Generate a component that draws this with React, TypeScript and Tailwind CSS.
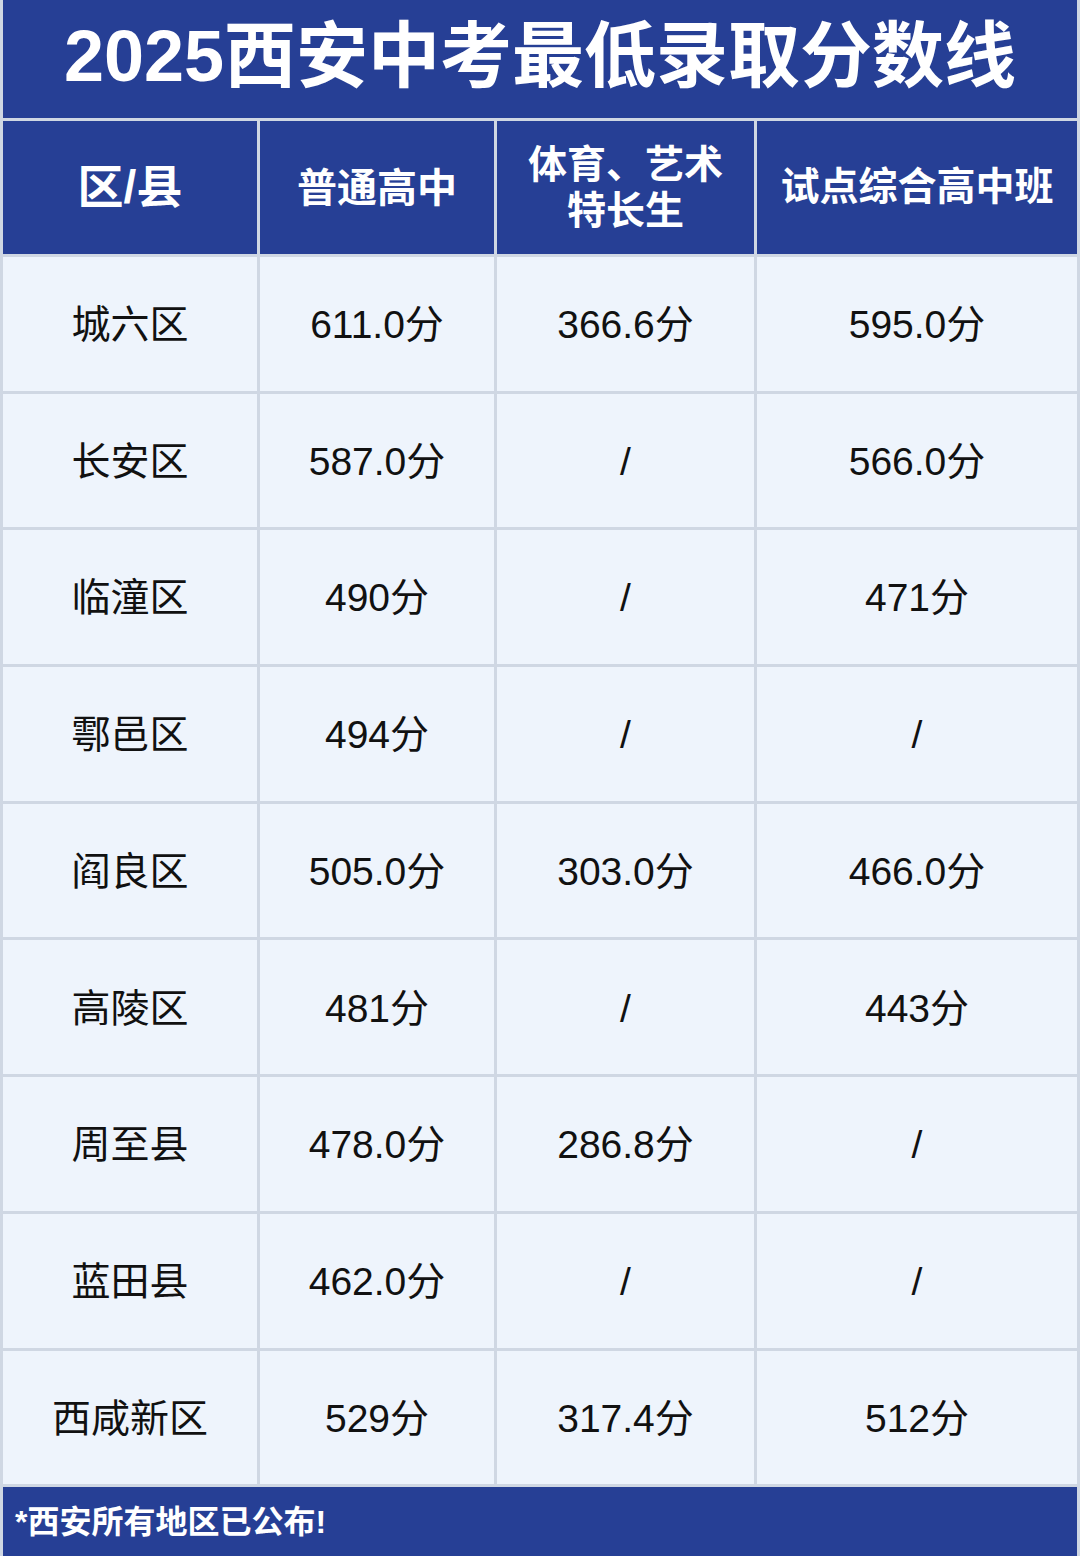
import React from 'react';

const rows: [string, string, string, string][] = [
  ['城六区', '611.0分', '366.6分', '595.0分'],
  ['长安区', '587.0分', '/', '566.0分'],
  ['临潼区', '490分', '/', '471分'],
  ['鄠邑区', '494分', '/', '/'],
  ['阎良区', '505.0分', '303.0分', '466.0分'],
  ['高陵区', '481分', '/', '443分'],
  ['周至县', '478.0分', '286.8分', '/'],
  ['蓝田县', '462.0分', '/', '/'],
  ['西咸新区', '529分', '317.4分', '512分'],
];

const font = { fontFamily: '"Liberation Sans", "Noto Sans CJK SC", sans-serif' };

export default function App() {
  return (
    <div
      className="w-[1080px] h-[1556px] bg-[#cfd7e3] px-[3px] flex flex-col gap-[3px]"
      style={font}
    >
      {/* Title */}
      <div className="h-[118px] shrink-0 bg-[#263f95] flex items-center justify-center">
        <h1 className="text-white text-[72px] font-bold leading-none pb-[6px]">
          2025西安中考最低录取分数线
        </h1>
      </div>

      {/* Table */}
      <div className="grid grid-cols-[254px_234px_257px_1fr] gap-[3px]">
        <div className="h-[133px] bg-[#263f95] flex items-center justify-center text-white text-[46px] font-bold">
          区/县
        </div>
        <div className="h-[133px] bg-[#263f95] flex items-center justify-center text-white text-[40px] font-bold">
          普通高中
        </div>
        <div className="h-[133px] bg-[#263f95] flex flex-col items-center justify-center text-white text-[39px] font-bold leading-[46px]">
          <span>体育、艺术</span>
          <span>特长生</span>
        </div>
        <div className="h-[133px] bg-[#263f95] flex items-center justify-center text-white text-[39px] font-bold">
          试点综合高中班
        </div>

        {rows.map((r) =>
          r.map((cell, i) => (
            <div
              key={r[0] + i}
              className="h-[133.7px] bg-[#eef4fc] flex items-center justify-center text-[#111111] text-[39px] pt-[3px]"
            >
              {cell}
            </div>
          ))
        )}
      </div>

      {/* Footer */}
      <div className="flex-1 bg-[#263f95] flex items-center px-[12px]">
        <p className="text-white text-[32px] font-bold">*西安所有地区已公布!</p>
      </div>
    </div>
  );
}
